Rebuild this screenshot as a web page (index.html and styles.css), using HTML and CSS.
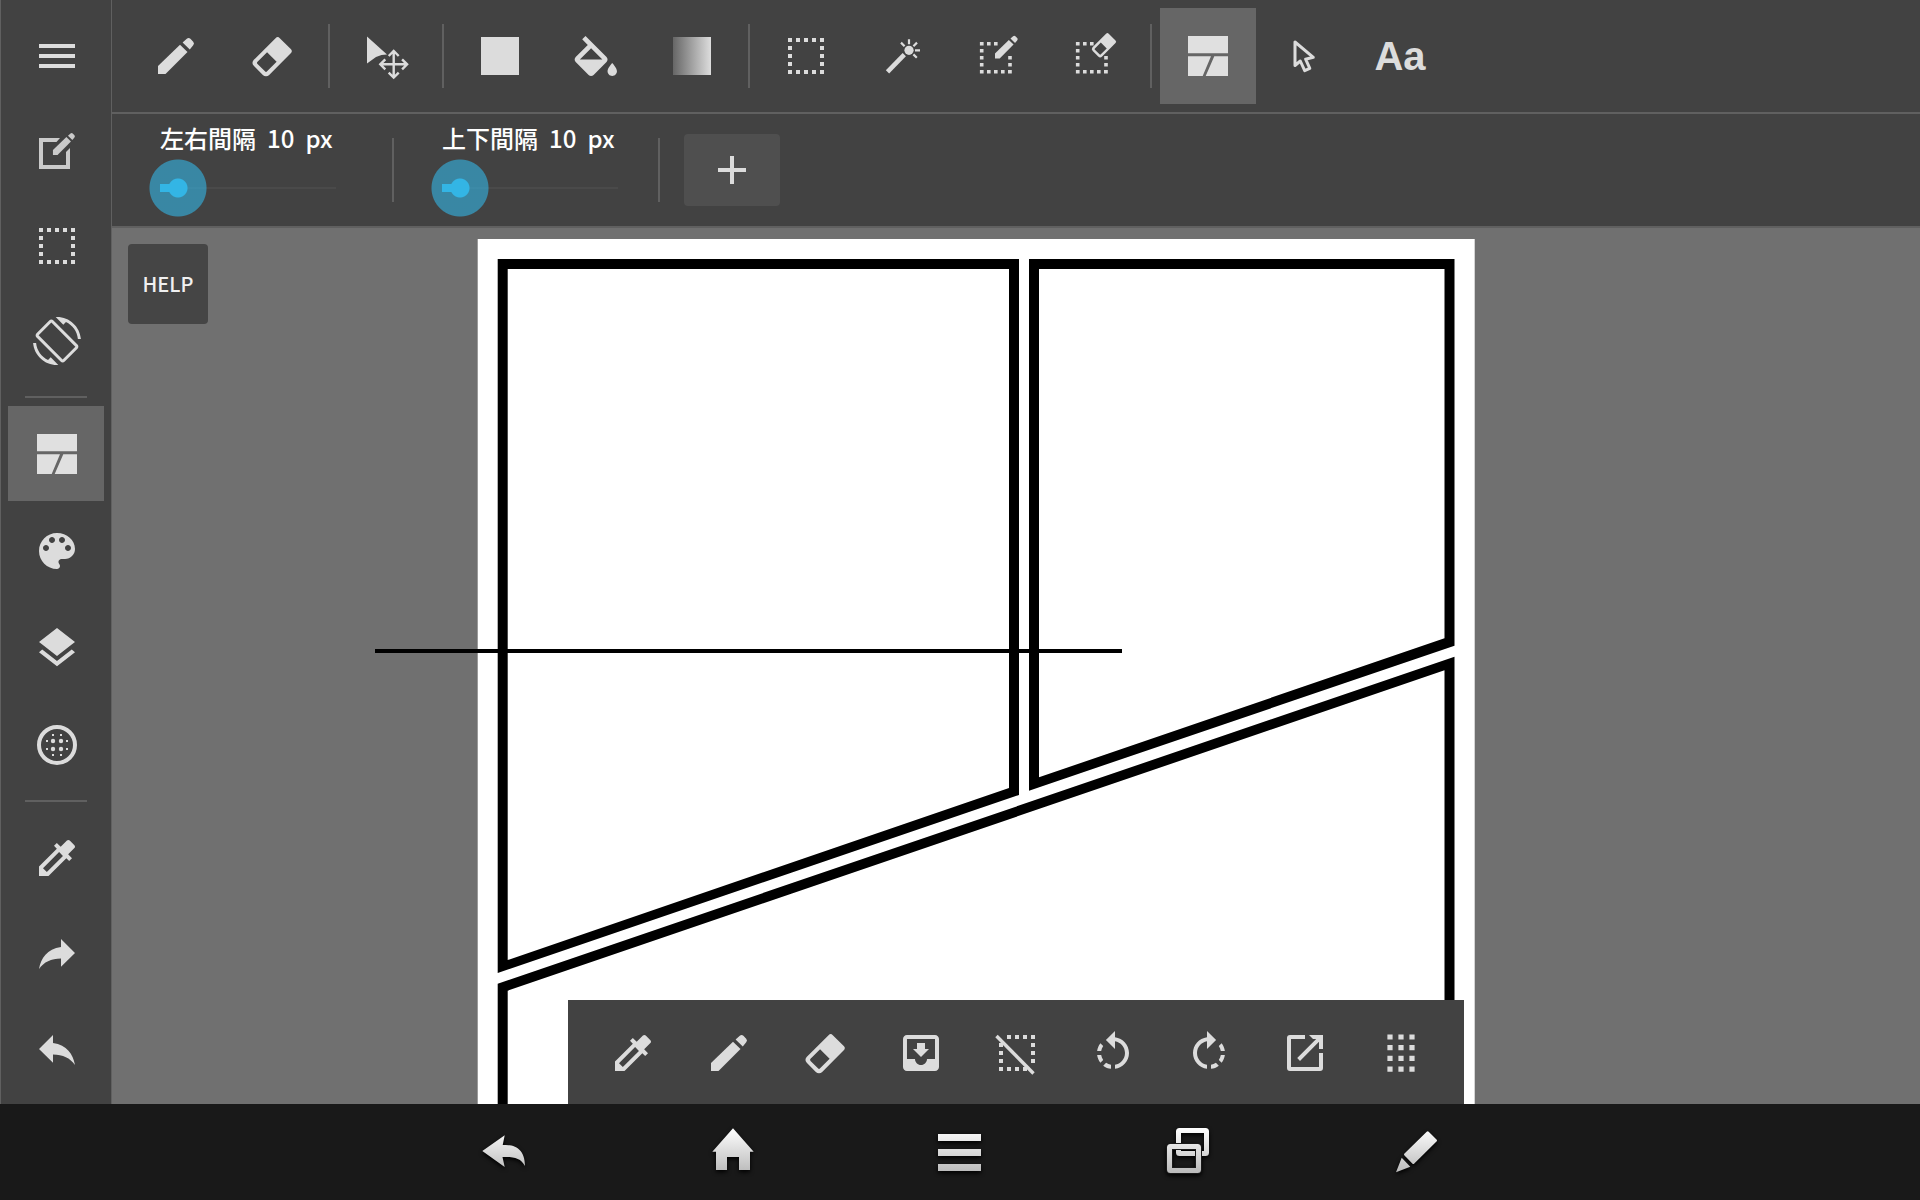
FILE: index.html
```html
<!DOCTYPE html>
<html lang="ja">
<head>
    <meta charset="UTF-8">
    <meta name="viewport" content="width=device-width, initial-scale=1.0">
    <title>コマ割り</title>
    <link rel="stylesheet" href="styles.css">
</head>
<body>
    <!-- Shared icon shapes -->
    <svg class="icon-defs" width="0" height="0" aria-hidden="true">
        <defs>
            <linearGradient id="fade" x1="0" x2="1" y1="0" y2="0">
                <stop offset="0" stop-color="#666"/>
                <stop offset="1" stop-color="#ddd"/>
            </linearGradient>
            <linearGradient id="metal" gradientUnits="userSpaceOnUse" x1="0" x2="0" y1="0" y2="44">
                <stop offset="0" stop-color="#fff"/>
                <stop offset="1" stop-color="#bbb"/>
            </linearGradient>
            <g id="pencil">
                <path d="M6 34V42H13.5L35.5 20L28 12.8Z"/>
                <path d="M30.6 10.4L34.8 6.8Q36.6 5.2 38.4 6.8L41.2 9.7Q42.8 11.5 41.2 13.3L37.8 17.4Z"/>
            </g>
            <path id="eraser" transform="rotate(-45)" fill-rule="evenodd" d="M-15.5-10.75H15.5a3 3 0 0 1 3 3V7.75a3 3 0 0 1-3 3H-15a4.5 4.5 0 0 1-4.5-4.5V-6.25a4.5 4.5 0 0 1 4-4.5zM-14-6.75H-.5V6.75H-14a1.5 1.5 0 0 1-1.5-1.5V-5.25a1.5 1.5 0 0 1 1.5-1.5z"/>
            <g id="marquee" fill="none" stroke="currentColor" stroke-width="4" stroke-dasharray="4 4">
                <path d="M6 8H42M6 40H42M8 6V42M40 6V42"/>
            </g>
            <g id="marquee-open" fill="none" stroke="currentColor" stroke-width="3.6" stroke-dasharray="3.6 3.4">
                <path d="M6 11.7H24M6 39.7H38M7.7 10V42M36 24V42"/>
            </g>
            <path id="frames" d="M4 4H44V21.3H4ZM4 24.3H27L18.7 44H4ZM30.3 24.3H44V44H21.7Z"/>
            <path id="dropper" transform="scale(2)" d="M20.71 5.63l-2.34-2.34c-.39-.39-1.02-.39-1.41 0l-3.12 3.12-1.93-1.91-1.41 1.41 1.42 1.42L3 16.25V21h4.75l8.92-8.92 1.42 1.42 1.41-1.41-1.92-1.92 3.12-3.12c.4-.4.4-1.03.01-1.42zM6.92 19L5 17.08l8.06-8.06 1.92 1.92L6.92 19z"/>
            <path id="redo" d="M42 23L28 9V17C14 19 8 28 6 39C11 32 18 28.5 28 28.5V36.7Z"/>
            <path id="rotate" transform="scale(2)" d="M7.11 8.53L5.7 7.11C4.8 8.27 4.24 9.61 4.07 11h2.02c.14-.87.49-1.72 1.02-2.47zM6.09 13H4.07c.17 1.39.72 2.73 1.62 3.89l1.41-1.42c-.52-.75-.87-1.59-1.01-2.47zm1.01 5.32c1.16.9 2.51 1.44 3.9 1.61V17.9c-.87-.15-1.71-.49-2.46-1.03L7.1 18.32zM13 4.07V1L8.45 5.55 13 10V6.09c2.84.48 5 2.94 5 5.91s-2.16 5.43-5 5.91v2.02c3.95-.49 7-3.85 7-7.93s-3.05-7.44-7-7.93z"/>
        </defs>
    </svg>

    <div class="app">
        <nav class="sidebar">
            <div class="tool-group">
                <button class="tool" aria-label="メニュー"><svg class="icon" viewBox="0 0 48 48"><path d="M6 12H42V16H6ZM6 22H42V26H6ZM6 32H42V36H6Z"/></svg></button>
                <button class="tool dim" aria-label="編集"><svg class="icon" viewBox="0 0 48 48"><path d="M27 11L23.5 15H10V38H33V25L37 21V42H6V11Z"/><use href="#pencil" transform="translate(16.3 2.3) scale(.61)"/></svg></button>
                <button class="tool" aria-label="選択"><svg class="icon" viewBox="0 0 48 48"><use href="#marquee"/></svg></button>
                <button class="tool" aria-label="画面回転"><svg class="icon" viewBox="0 0 24 24"><path d="M16.48 2.52c3.27 1.55 5.61 4.72 5.97 8.48h1.5C23.44 4.84 18.29 0 12 0l-.66.03 3.81 3.81 1.33-1.32zm-6.25-.77c-.59-.59-1.54-.59-2.12 0L1.75 8.11c-.59.59-.59 1.54 0 2.12l12.02 12.02c.59.59 1.54.59 2.12 0l6.36-6.36c.59-.59.59-1.54 0-2.12L10.23 1.75zm4.6 19.44L2.81 9.17l6.36-6.36 12.02 12.02-6.36 6.36zm-7.31.29C4.25 19.94 1.91 16.76 1.55 13H.05C.56 19.16 5.71 24 12 24l.66-.03-3.81-3.81-1.33 1.32z"/></svg></button>
            </div>
            <hr class="divider">
            <div class="tool-group panels">
                <button class="tool active" aria-label="コマ割り"><svg class="icon" viewBox="0 0 48 48"><use href="#frames"/></svg></button>
                <button class="tool" aria-label="カラー"><svg class="icon" viewBox="0 0 24 24"><path d="M12 3c-4.97 0-9 4.03-9 9s4.03 9 9 9c.83 0 1.5-.67 1.5-1.5 0-.39-.15-.74-.39-1.01-.23-.26-.38-.61-.38-.99 0-.83.67-1.5 1.5-1.5H16c2.76 0 5-2.24 5-5 0-4.42-4.03-8-9-8zm-5.5 9c-.83 0-1.5-.67-1.5-1.5S5.67 9 6.5 9 8 9.67 8 10.5 7.33 12 6.5 12zm3-4C8.67 8 8 7.33 8 6.5S8.67 5 9.5 5s1.5.67 1.5 1.5S10.33 8 9.5 8zm5 0c-.83 0-1.5-.67-1.5-1.5S13.67 5 14.5 5s1.5.67 1.5 1.5S15.33 8 14.5 8zm3 4c-.83 0-1.5-.67-1.5-1.5S16.67 9 17.5 9s1.5.67 1.5 1.5-.67 1.5-1.5 1.5z"/></svg></button>
                <button class="tool" aria-label="レイヤー"><svg class="icon" viewBox="0 0 24 24"><path d="M11.99 18.54l-7.37-5.73L3 14.07l9 7 9-7-1.63-1.27-7.38 5.74zM12 16l7.36-5.73L21 9l-9-7-9 7 1.63 1.27L12 16z"/></svg></button>
                <button class="tool" aria-label="素材">
                    <svg class="icon" viewBox="0 0 48 48">
                        <circle cx="24" cy="24" r="18" fill="none" stroke="currentColor" stroke-width="4"/>
                        <circle cx="20" cy="20" r="2.2"/><circle cx="28" cy="20" r="2.2"/><circle cx="20" cy="28" r="2.2"/><circle cx="28" cy="28" r="2.2"/>
                        <path d="M19 13h2v2h-2zM27 13h2v2h-2zM19 33h2v2h-2zM27 33h2v2h-2zM13 19h2v2h-2zM13 27h2v2h-2zM33 19h2v2h-2zM33 27h2v2h-2z"/>
                    </svg>
                </button>
            </div>
            <hr class="divider">
            <div class="tool-group history">
                <button class="tool" aria-label="スポイト"><svg class="icon" viewBox="0 0 48 48"><use href="#dropper"/></svg></button>
                <button class="tool" aria-label="やり直す"><svg class="icon" viewBox="0 0 48 48"><use href="#redo"/></svg></button>
                <button class="tool" aria-label="元に戻す"><svg class="icon" viewBox="0 0 48 48"><use href="#redo" transform="translate(48 0) scale(-1 1)"/></svg></button>
            </div>
        </nav>

        <div class="workspace">
            <div class="toolbar">
                <button class="tool" aria-label="ペン"><svg class="icon" viewBox="0 0 48 48"><use href="#pencil"/></svg></button>
                <button class="tool" aria-label="消しゴム"><svg class="icon" viewBox="0 0 48 48"><use href="#eraser" transform="translate(24.2 24.7)"/></svg></button>
                <span class="separator"></span>
                <button class="tool" aria-label="移動">
                    <svg class="icon" viewBox="0 0 48 48">
                        <path d="M5 4.5L25 22.5L19.5 23L14 25L5 31.5Z"/>
                        <path fill="none" stroke="currentColor" stroke-width="2.4" d="M31.7 19V46M18 32.3H45.5M26.7 24L31.7 19L36.7 24M26.7 40.6L31.7 45.6L36.7 40.6M23.3 27.3L18.3 32.3L23.3 37.3M40.1 27.3L45.1 32.3L40.1 37.3"/>
                    </svg>
                </button>
                <span class="separator"></span>
                <button class="tool" aria-label="図形"><svg class="icon" viewBox="0 0 48 48"><rect x="5" y="5" width="38" height="38"/></svg></button>
                <button class="tool" aria-label="塗りつぶし"><svg class="icon" viewBox="0 0 48 48"><path transform="translate(-4.4 4) scale(2.35)" d="M16.56 8.94L7.62 0 6.21 1.41l2.38 2.38-5.15 5.15c-.59.59-.59 1.54 0 2.12l5.5 5.5c.29.29.68.44 1.06.44s.77-.15 1.06-.44l5.5-5.5c.59-.58.59-1.53 0-2.12zM5.21 10L10 5.21 14.79 10H5.21zM19 11.5s-2 2.17-2 3.5c0 1.1.9 2 2 2s2-.9 2-2c0-1.33-2-3.5-2-3.5z"/></svg></button>
                <button class="tool" aria-label="グラデーション"><svg class="icon" viewBox="0 0 48 48"><rect x="5" y="5" width="38" height="38" fill="url(#fade)"/></svg></button>
                <span class="separator"></span>
                <button class="tool" aria-label="範囲選択"><svg class="icon" viewBox="0 0 48 48"><use href="#marquee"/></svg></button>
                <button class="tool" aria-label="自動選択">
                    <svg class="icon" viewBox="0 0 48 48">
                        <circle cx="31" cy="18.3" r="4.6"/>
                        <path fill="none" stroke="currentColor" stroke-width="4.6" d="M9.5 39.8L26.3 22.6"/>
                        <path fill="none" stroke="currentColor" stroke-width="2.2" d="M31 7.3V12.3M23 10.6L26.6 14.2M39 10.6L35.4 14.2M37 18.4H42M35.4 22.4L38.8 25.8"/>
                    </svg>
                </button>
                <button class="tool" aria-label="選択ペン"><svg class="icon" viewBox="0 0 48 48"><use href="#marquee-open"/><use href="#pencil" transform="translate(17.2 0) scale(.63)"/></svg></button>
                <button class="tool" aria-label="選択消し"><svg class="icon" viewBox="0 0 48 48"><use href="#marquee-open"/><use href="#eraser" transform="translate(34 13.2) scale(.62)"/></svg></button>
                <span class="separator"></span>
                <button class="tool active" aria-label="コマ割り"><svg class="icon" viewBox="0 0 48 48"><use href="#frames"/></svg></button>
                <button class="tool" aria-label="操作"><svg class="icon" viewBox="0 0 48 48"><path fill="none" stroke="currentColor" stroke-width="3" stroke-linejoin="round" d="M15 10V33.5L20.3 29L24.7 38.6L29.8 36.3L25.6 27.2L33.3 25.3Z"/></svg></button>
                <button class="tool text-tool">Aa</button>
            </div>

            <div class="options">
                <div class="spacing">
                    <label for="spacingX"><span>左右間隔</span><span>10</span><span>px</span></label>
                    <input type="range" id="spacingX" min="0" max="180" value="10">
                </div>
                <span class="separator"></span>
                <div class="spacing">
                    <label for="spacingY"><span>上下間隔</span><span>10</span><span>px</span></label>
                    <input type="range" id="spacingY" min="0" max="180" value="10">
                </div>
                <span class="separator"></span>
                <button class="add-btn" aria-label="追加"><svg class="icon" viewBox="0 0 48 48"><path d="M22 10H26V22H38V26H26V38H22V26H10V22H22Z"/></svg></button>
            </div>

            <main class="canvas">
                <svg class="page" viewBox="0 0 1808 876" preserveAspectRatio="xMidYMin slice">
                    <rect x="365.7" y="11" width="997" height="900" fill="#fff"/>
                    <g fill-rule="evenodd">
                        <path d="M385.7 31H907V567L385.7 745ZM395.7 41H897V560L395.7 732Z"/>
                        <path d="M917 31H1342.5V417.7L917 562.7ZM927 41H1332.5V410.3L927 549.3Z"/>
                        <path d="M385.7 755.7L1342.5 428.7V900H385.7ZM395.7 762.7L1332.5 442.3V890H395.7Z"/>
                    </g>
                    <!-- cut line being dragged -->
                    <rect x="263" y="421" width="747" height="4"/>
                </svg>

                <button class="help-btn">HELP</button>

                <div class="quick-bar">
                    <button class="tool" aria-label="スポイト"><svg class="icon" viewBox="0 0 48 48"><use href="#dropper"/></svg></button>
                    <button class="tool" aria-label="ペン"><svg class="icon" viewBox="0 0 48 48"><use href="#pencil"/></svg></button>
                    <button class="tool" aria-label="消しゴム"><svg class="icon" viewBox="0 0 48 48"><use href="#eraser" transform="translate(24.2 24.7)"/></svg></button>
                    <button class="tool" aria-label="保存"><svg class="icon" viewBox="0 0 24 24"><path d="M19 3H4.99c-1.11 0-1.98.9-1.98 2L3 19c0 1.1.88 2 1.99 2H19c1.1 0 2-.9 2-2V5c0-1.1-.9-2-2-2zm0 12h-4c0 1.66-1.35 3-3 3s-3-1.34-3-3H4.99V5H19v10zm-3-5h-2V7h-4v3H8l4 4 4-4z"/></svg></button>
                    <button class="tool" aria-label="選択解除">
                        <svg class="icon" viewBox="0 0 48 48">
                            <path fill="none" stroke="currentColor" stroke-width="4" stroke-dasharray="4 4" d="M14 8H42M6 40H34M8 14V42M40 6V34"/>
                            <path fill="none" stroke="currentColor" stroke-width="3.4" d="M3.5 7L40.5 44.5"/>
                        </svg>
                    </button>
                    <button class="tool" aria-label="左回転"><svg class="icon" viewBox="0 0 48 48"><use href="#rotate"/></svg></button>
                    <button class="tool" aria-label="右回転"><svg class="icon" viewBox="0 0 48 48"><use href="#rotate" transform="translate(48 0) scale(-1 1)"/></svg></button>
                    <button class="tool" aria-label="書き出し"><svg class="icon" viewBox="0 0 48 48"><path d="M24 6V10H10V38H38V24H42V39a3 3 0 0 1-3 3H9a3 3 0 0 1-3-3V9a3 3 0 0 1 3-3ZM28 6H42V20H38V12.8L19 31.9L16.2 29.1L35.2 10H32Z"/></svg></button>
                    <button class="tool" aria-label="一覧"><svg class="icon" viewBox="0 0 48 48"><path fill="none" stroke="currentColor" stroke-width="5.2" stroke-dasharray="5.2 5.5" d="M13 5.4V42.8M24 5.4V42.8M35 5.4V42.8"/></svg></button>
                </div>
            </main>
        </div>
    </div>

    <footer class="system-nav">
        <button class="nav-btn" aria-label="戻る"><svg class="icon" viewBox="0 0 48 48"><path d="M2.3 23L24.7 7.3L22.7 17C35 16 45 21 45 38C41 30 34 28.5 22.5 29L24.7 39Z"/></svg></button>
        <button class="nav-btn" aria-label="ホーム"><svg class="icon" viewBox="0 0 48 48"><path d="M25 .3L45.7 23.7H42V42H31V29H19V42H8V23.7H4.3Z"/></svg></button>
        <button class="nav-btn" aria-label="メニュー"><svg class="icon" viewBox="0 0 48 48"><path d="M2 6H45V13H2ZM2 21H45V28H2ZM2 36H45V43H2Z"/></svg></button>
        <button class="nav-btn" aria-label="履歴">
            <svg class="icon" viewBox="0 0 48 48">
                <g fill="none" stroke="url(#metal)" stroke-width="5">
                    <rect x="14.5" y="2.5" width="28" height="23" rx="1"/>
                    <rect x="5.5" y="18.5" width="29" height="24" rx="1" stroke="#191919" stroke-width="7"/>
                    <rect x="5.5" y="18.5" width="29" height="24" rx="1"/>
                </g>
            </svg>
        </button>
        <button class="nav-btn" aria-label="ペン"><svg class="icon" viewBox="0 0 48 48"><path d="M34.7 3.8Q35.7 2.8 36.7 3.8L44.5 11.5Q45.5 12.5 44.5 13.5L22.3 35.5Q21.3 36.5 20.3 35.5L12.5 27.5Q11.5 26.5 12.5 25.5ZM9.7 29.7L18.3 38.7L4 44.3Z"/></svg></button>
    </footer>
</body>
</html>
```
FILE: styles.css
```css
* {
    box-sizing: border-box;
}

body {
    margin: 0;
    height: 100vh;
    display: flex;
    flex-direction: column;
    overflow: hidden;
    background: #191919;
    color: #dcdcdc;
    font-family: "Noto Sans CJK JP", "Noto Sans", sans-serif;
}

button {
    padding: 0;
    border: none;
    background: none;
    color: inherit;
    font-family: inherit;
    cursor: pointer;
}

.icon-defs {
    position: absolute;
}

.icon {
    display: block;
    width: 48px;
    height: 48px;
    fill: currentColor;
}

.app {
    flex: 1;
    display: flex;
    min-height: 0;
}

.tool {
    display: flex;
    flex-shrink: 0;
    align-items: center;
    justify-content: center;
    width: 96px;
    height: 96px;
}

.tool.active {
    background: #666;
    color: #e0e0e0;
}

.tool.dim {
    color: #cacaca;
}

/* Sidebar */
.sidebar {
    display: flex;
    flex-direction: column;
    flex-shrink: 0;
    align-items: center;
    width: 112px;
    padding-top: 8px;
    background: #424242;
    border-left: 1px solid #606060;
    border-right: 1px solid #606060;
}

.tool-group {
    display: flex;
    flex-direction: column;
}

.tool-group.panels {
    gap: 2px;
}

.tool-group.history {
    gap: 1px;
}

.sidebar .tool {
    height: 95px;
    padding-left: 2px;
}

.divider {
    width: 62px;
    height: 2px;
    margin: 8px 0;
    border: none;
    background: #606060;
}

/* Top bars */
.workspace {
    flex: 1;
    display: flex;
    flex-direction: column;
    min-width: 0;
}

.toolbar,
.options {
    display: flex;
    flex-shrink: 0;
    align-items: center;
    height: 114px;
    background: #424242;
    border-bottom: 2px solid #606060;
}

.toolbar {
    padding-left: 16px;
}

.separator {
    flex-shrink: 0;
    width: 2px;
    height: 64px;
    margin: 0 8px;
    background: #606060;
}

.text-tool {
    font-family: "Liberation Sans", Arial, sans-serif;
    font-size: 40px;
    font-weight: bold;
}

.options .separator {
    margin: 0;
}

.spacing {
    width: 176px;
    margin: 0 40px 0 48px;
}

.spacing:first-child {
    margin-right: 56px;
}

.spacing label {
    display: flex;
    gap: 11px;
    height: 36px;
    color: #fff;
    font-size: 24px;
    font-weight: 500;
    line-height: 34px;
    white-space: nowrap;
}

/* wider than the track so the thumb halo can hang over its ends */
.spacing input {
    display: block;
    appearance: none;
    width: 216px;
    height: 62px;
    margin: 0 -20px;
    background: none;
}

.spacing input::-webkit-slider-runnable-track {
    height: 58px;
    background:
        linear-gradient(#33b5e5, #33b5e5) 20px center / 16px 8px no-repeat,
        linear-gradient(#4a4a4a, #4a4a4a) 20px center / 176px 2px no-repeat;
}

.spacing input::-webkit-slider-thumb {
    appearance: none;
    width: 58px;
    height: 58px;
    background: radial-gradient(circle, #33b5e5 9px, rgba(51, 181, 229, 0.6) 10px, rgba(51, 181, 229, 0.6) 28px, rgba(51, 181, 229, 0) 29px);
}

.add-btn {
    display: flex;
    align-items: center;
    justify-content: center;
    width: 96px;
    height: 72px;
    margin-left: 24px;
    border-radius: 4px;
    background: #4f4f4f;
}

/* Canvas */
.canvas {
    flex: 1;
    position: relative;
    min-height: 0;
    overflow: hidden;
    background: #707070;
}

.page {
    display: block;
    width: 100%;
    height: 100%;
}

.help-btn {
    position: absolute;
    top: 16px;
    left: 16px;
    width: 80px;
    height: 80px;
    padding-bottom: 2px;
    border-radius: 4px;
    background: #454545;
    color: #f0f0f0;
    font-size: 20px;
    font-weight: 500;
}

.quick-bar {
    position: absolute;
    bottom: 0;
    left: 50%;
    display: flex;
    align-items: center;
    justify-content: center;
    width: 896px;
    height: 104px;
    padding: 2px 0 0 2px;
    background: #424242;
    transform: translateX(-50%);
}

/* System navigation */
.system-nav {
    display: flex;
    flex-shrink: 0;
    justify-content: center;
    height: 96px;
    background: #191919;
}

.nav-btn {
    display: flex;
    align-items: center;
    justify-content: center;
    width: 228px;
}

.nav-btn .icon {
    fill: url(#metal);
    filter: drop-shadow(0 2px 2px #000);
}
```
